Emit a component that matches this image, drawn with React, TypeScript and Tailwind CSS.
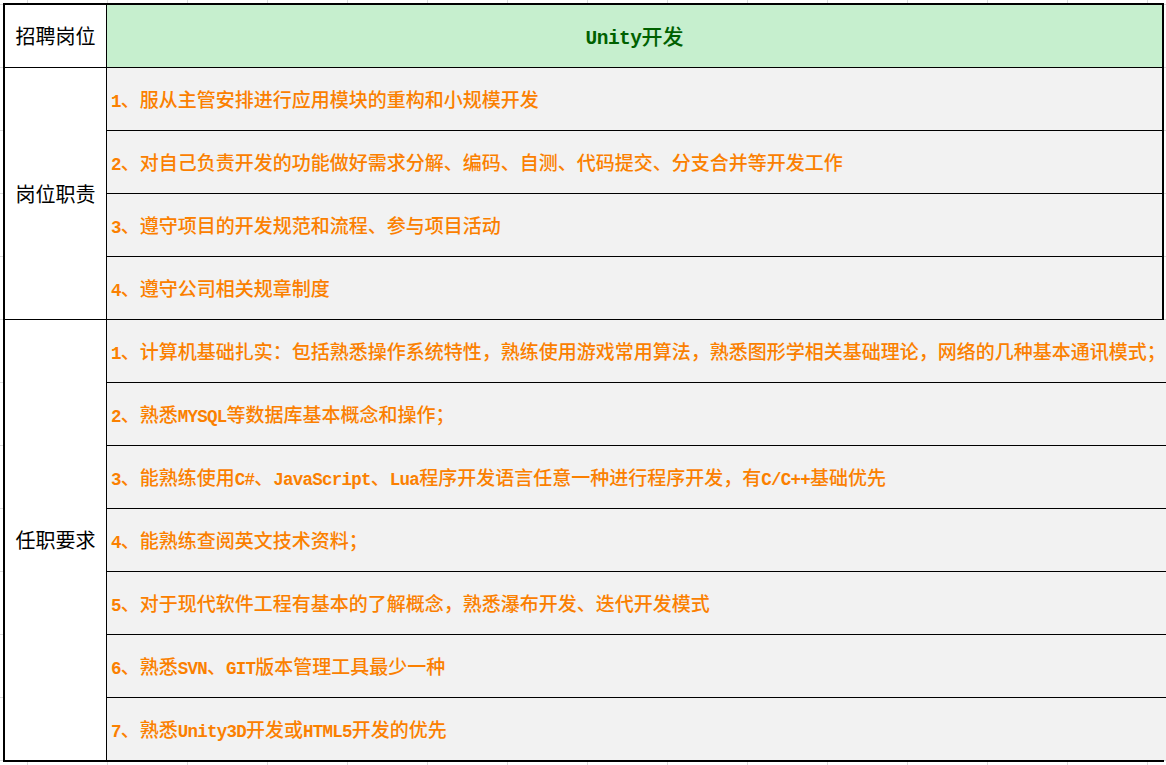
import React from "react"

const duties = [
  "1、服从主管安排进行应用模块的重构和小规模开发",
  "2、对自己负责开发的功能做好需求分解、编码、自测、代码提交、分支合并等开发工作",
  "3、遵守项目的开发规范和流程、参与项目活动",
  "4、遵守公司相关规章制度",
]

const requirements = [
  "1、计算机基础扎实：包括熟悉操作系统特性，熟练使用游戏常用算法，熟悉图形学相关基础理论，网络的几种基本通讯模式；",
  "2、熟悉MYSQL等数据库基本概念和操作；",
  "3、能熟练使用C#、JavaScript、Lua程序开发语言任意一种进行程序开发，有C/C++基础优先",
  "4、能熟练查阅英文技术资料；",
  "5、对于现代软件工程有基本的了解概念，熟悉瀑布开发、迭代开发模式",
  "6、熟悉SVN、GIT版本管理工具最少一种",
  "7、熟悉Unity3D开发或HTML5开发的优先",
]

const cjkFont = { fontFamily: '"Noto Sans CJK SC", "Noto Sans", sans-serif' }
const monoFont = { fontFamily: '"Liberation Mono", monospace' }

// latin runs are half-width in the sheet's font, so set them in a tighter mono
function Mixed({ text, latinClass }: { text: string; latinClass: string }) {
  const parts = text.split(/([A-Za-z0-9#+/.]+)/)
  return (
    <span>
      {parts.map((p, i) =>
        i % 2 === 1 ? (
          <span key={i} className={latinClass} style={monoFont}>
            {p}
          </span>
        ) : (
          <span key={i}>{p}</span>
        )
      )}
    </span>
  )
}

function Group({ label, items }: { label: string; items: string[] }) {
  return (
    <div className="flex border-t border-black">
      {/* merged label cell */}
      <div
        className="w-[102px] shrink-0 flex items-center justify-center border-r border-black bg-white text-[20px] text-black"
        style={cjkFont}
      >
        {label}
      </div>
      <div className="flex-1 flex flex-col">
        {items.map((t, i) => (
          <div
            key={i}
            className={
              i > 0
                ? "h-[63px] border-t border-black flex items-center pl-[4px] pt-[2px] bg-[#f2f2f2] text-[19px] font-medium text-[#fb8000] whitespace-nowrap"
                : "h-[62px] flex items-center pl-[4px] pt-[2px] bg-[#f2f2f2] text-[19px] font-medium text-[#fb8000] whitespace-nowrap"
            }
            style={cjkFont}
          >
            <Mixed text={t} latinClass="text-[17.5px] tracking-[-0.75px] font-bold" />
          </div>
        ))}
      </div>
    </div>
  )
}

export default function App() {
  return (
    <main className="w-[1166px] h-[765px] overflow-hidden bg-white bg-[linear-gradient(to_right,#dcdcdc_1px,transparent_1px),linear-gradient(to_bottom,#dcdcdc_1px,transparent_1px)] bg-[size:80px_63px] bg-[position:27px_4px] pt-[3px] pl-[3px]">
      <div className="w-[1161px] border-2 border-black flex flex-col bg-white">
        {/* header row */}
        <div className="h-[62px] flex">
          <div
            className="w-[102px] shrink-0 flex items-center justify-center border-r border-black text-[20px] text-black"
            style={cjkFont}
          >
            招聘岗位
          </div>
          <div
            className="flex-1 flex items-center justify-center pt-[3px] bg-[#c6efce] text-[21px] font-medium text-[#006100]"
            style={cjkFont}
          >
            <Mixed text="Unity开发" latinClass="text-[19.5px] tracking-[-0.5px] font-bold" />
          </div>
        </div>

        <Group label="岗位职责" items={duties} />
        <Group label="任职要求" items={requirements} />
      </div>
    </main>
  )
}
